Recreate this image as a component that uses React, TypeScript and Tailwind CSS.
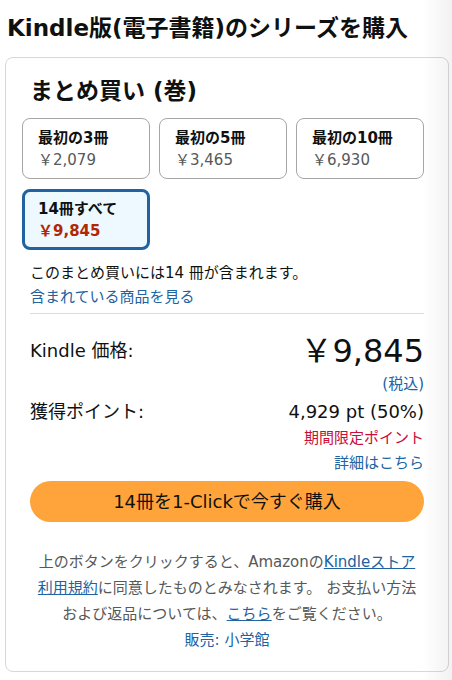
import React from 'react';

interface Bundle { label: string; price: string; selected?: boolean }

const bundles: Bundle[] = [
  { label: '最初の3冊', price: '￥2,079' },
  { label: '最初の5冊', price: '￥3,465' },
  { label: '最初の10冊', price: '￥6,930' },
  { label: '14冊すべて', price: '￥9,845', selected: true },
];

const font = { fontFamily: '"DejaVu Sans", "Noto Sans CJK JP", sans-serif' };

function BundleBox({ b }: { b: Bundle }) {
  return (
    <div
      className={
        b.selected
          ? 'h-[61px] rounded-lg border-[3px] border-[#2162a1] bg-[#edf8ff] px-[13px] pt-[7px]'
          : 'h-[61px] rounded-lg border border-[#a6a6a6] bg-white px-[15px] pt-[9px]'
      }
    >
      <div className="text-[15px] font-bold leading-[21px] text-[#0f1111]">{b.label}</div>
      <div
        className={
          b.selected
            ? 'mt-[1px] text-[15px] font-bold leading-[21px] text-[#b12704]'
            : 'mt-[1px] text-[15px] leading-[21px] text-[#565959]'
        }
      >
        {b.price}
      </div>
    </div>
  );
}

export default function App() {
  return (
    <div className="relative min-h-[680px] bg-white text-[#0f1111]" style={font}>
      <div className="pl-[5px] pr-[3px] pt-[12px]">
        <h1 className="pl-[2px] text-[23px] font-bold leading-[32px] whitespace-nowrap">Kindle版(電子書籍)のシリーズを購入</h1>
        <div className="mt-[13px] rounded-lg border border-[#d5d9d9] px-[24px] pt-[18px] pb-[20px]">
          <h2 className="text-[23px] font-bold leading-[30px]">まとめ買い (巻)</h2>

          <div className="mt-[12px] -ml-[8px] grid grid-cols-3 gap-x-[9px] gap-y-[10px]">
            {bundles.map(b => (
              <BundleBox key={b.label} b={b} />
            ))}
          </div>

          <p className="mt-[12px] text-[15px] leading-[22px]">このまとめ買いには14 冊が含まれます。</p>
          <a className="block text-[15px] leading-[26px] text-[#2162a1]">含まれている商品を見る</a>

          <div className="mt-[3px] h-px bg-[#dddddd]" />

          <div className="mt-[15px] flex items-center justify-between">
            <span className="text-[18px] leading-[24px]">Kindle 価格:</span>
            <span className="text-[32px] leading-[44px]">￥9,845</span>
          </div>
          <div className="text-right text-[15px] leading-[22px] text-[#2162a1]">(税込)</div>
          <div className="mt-[4px] flex items-center justify-between text-[18px] leading-[26px]">
            <span>獲得ポイント:</span>
            <span>4,929 pt (50%)</span>
          </div>
          <div className="text-right text-[15px] leading-[26px] text-[#cc0c39]">期間限定ポイント</div>
          <div className="text-right text-[15px] leading-[24px] text-[#2162a1]">詳細はこちら</div>

          <button className="mt-[6px] h-[41px] w-full rounded-full bg-[#ffa43a] text-[18px] text-[#0f1111]" style={font}>
            14冊を1-Clickで今すぐ購入
          </button>

          <p className="mt-[27px] px-[4px] text-center text-[15px] leading-[26px] text-[#565959]">
            上のボタンをクリックすると、Amazonの
            <a className="text-[#2162a1] underline">Kindleストア利用規約</a>
            に同意したものとみなされます。 お支払い方法および返品については、
            <a className="text-[#2162a1] underline">こちら</a>
            をご覧ください。
          </p>
          <p className="mt-[2px] text-center text-[15px] leading-[22px] text-[#2162a1]">販売: 小学館</p>
        </div>
      </div>
      <div className="pointer-events-none absolute inset-y-0 right-0 w-[30px] bg-gradient-to-r from-transparent to-black/[0.05]" />
    </div>
  );
}
